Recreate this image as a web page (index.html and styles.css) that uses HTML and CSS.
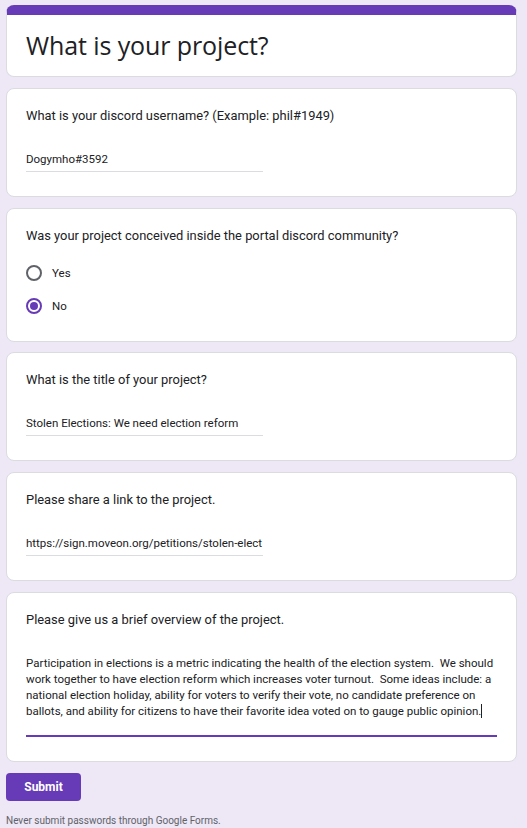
FILE: index.html
```html
<!DOCTYPE html>
<html lang="en">
<head>
<meta charset="utf-8">
<title>What is your project?</title>
<link rel="stylesheet" href="styles.css">
</head>
<body>
<main class="form">
  <section class="card title-card">
    <h1 class="form-title">What is your project?</h1>
  </section>

  <section class="card">
    <div class="question">What is your discord username? (Example: phil#1949)</div>
    <div class="short-answer">Dogymho#3592</div>
  </section>

  <section class="card card-radio">
    <div class="question">Was your project conceived inside the portal discord community?</div>
    <div class="options">
      <div class="option"><span class="radio"></span><span class="option-label">Yes</span></div>
      <div class="option"><span class="radio checked"></span><span class="option-label">No</span></div>
    </div>
  </section>

  <section class="card">
    <div class="question">What is the title of your project?</div>
    <div class="short-answer">Stolen Elections: We need election reform</div>
  </section>

  <section class="card">
    <div class="question">Please share a link to the project.</div>
    <div class="short-answer">https://sign.moveon.org/petitions/stolen-elect</div>
  </section>

  <section class="card">
    <div class="question">Please give us a brief overview of the project.</div>
    <div class="long-answer">Participation in elections is a metric indicating the health of the election system.&nbsp; We should work together to have election reform which increases voter turnout.&nbsp; Some ideas include: a national election holiday, ability for voters to verify their vote, no candidate preference on ballots, and ability for citizens to have their favorite idea voted on to gauge public opinion.<span class="caret"></span></div>
  </section>

  <button class="submit" type="button">Submit</button>
  <p class="footer-note">Never submit passwords through Google Forms.</p>
</main>
</body>
</html>
```

FILE: styles.css
```css
html, body {
  margin: 0;
  padding: 0;
}

body {
  background: #ede7f6;
  font-family: Roboto, "Liberation Sans", sans-serif;
  color: #202124;
}

.form {
  width: 511px;
  margin: 5px 0 0 6px;
  display: flex;
  flex-direction: column;
  align-items: flex-start;
}

.card {
  box-sizing: border-box;
  width: 100%;
  background: #fff;
  border: 1px solid #dadce0;
  border-radius: 8px;
  padding: 15px 19px 24px;
  margin-bottom: 10.75px;
}

.title-card {
  border-top: 10px solid #673ab7;
  height: 72px;
  padding: 13px 19px 0;
  border-top-color: #673ab7;
}

.form-title {
  margin: 0;
  font-family: "Open Sans", sans-serif;
  font-weight: 400;
  font-size: 25px;
  line-height: 34px;
  letter-spacing: -0.1px;
  color: #202124;
}

.question {
  font-family: Roboto, sans-serif;
  font-size: 12.9px;
  line-height: 24px;
  color: #202124;
}

.short-answer {
  margin-top: 22px;
  width: 237px;
  box-sizing: border-box;
  font-size: 11.5px;
  line-height: 18px;
  padding-bottom: 3px;
  border-bottom: 1px solid #dadce0;
  white-space: nowrap;
  overflow: hidden;
}

.card-radio {
  padding-bottom: 18px;
}

.options {
  margin-top: 9px;
  display: flex;
  flex-direction: column;
}

.option {
  height: 33px;
  display: flex;
  align-items: center;
  gap: 10px;
}

.radio {
  box-sizing: border-box;
  width: 16px;
  height: 16px;
  border: 2px solid #5f6368;
  border-radius: 50%;
  display: flex;
  align-items: center;
  justify-content: center;
}

.radio.checked {
  border-color: #673ab7;
}

.radio.checked::after {
  content: "";
  width: 8px;
  height: 8px;
  border-radius: 50%;
  background: #673ab7;
}

.option-label {
  font-size: 11.5px;
  color: #202124;
}

.long-answer {
  margin-top: 23px;
  font-size: 11.5px;
  line-height: 16px;
  padding-bottom: 16px;
  border-bottom: 2px solid #673ab7;
  color: #202124;
}

.caret {
  display: inline-block;
  width: 1px;
  height: 14px;
  background: #202124;
  vertical-align: -3px;
}

.submit {
  width: 75px;
  height: 28px;
  border: none;
  border-radius: 4px;
  background: #673ab7;
  color: #fff;
  font-family: Roboto, sans-serif;
  font-weight: 700;
  font-size: 12px;
  padding: 0;
  cursor: pointer;
}

.footer-note {
  margin: 13px 0 0;
  font-size: 10px;
  line-height: 14px;
  color: #5f6368;
}
```
